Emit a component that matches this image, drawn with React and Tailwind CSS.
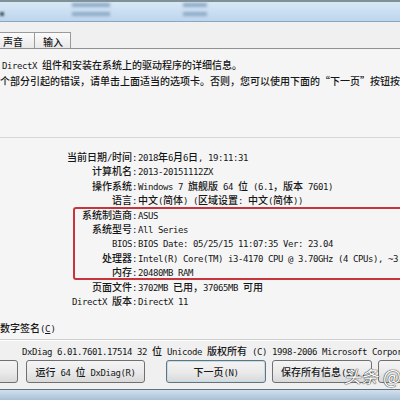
import React from "react";

// SimSun-style mix: CJK runs at full width, Latin runs as half-width mono
const CJK = /([\u2e80-\u9fff\u3000-\u303f\uff00-\uffef\u201c\u201d]+)/;

function T({ s }) {
  return s.split(CJK).map((part, i) =>
    part === "" ? null : CJK.test(part) ? (
      <span key={i} className="font-['Noto_Sans_CJK_SC',sans-serif] text-[10px] font-medium">{part}</span>
    ) : (
      <span key={i} className="font-['DejaVu_Sans_Mono',monospace] text-[9px] tracking-[-0.42px]">{part}</span>
    )
  );
}

const rows = [
  ["当前日期/时间", "2018年6月6日, 19:11:31"],
  ["计算机名", "2013-20151112ZX"],
  ["操作系统", "Windows 7 旗舰版 64 位 (6.1，版本 7601)"],
  ["语言", "中文(简体) (区域设置: 中文(简体))"],
  ["系统制造商", "ASUS"],
  ["系统型号", "All Series"],
  ["BIOS", "BIOS Date: 05/25/15 11:07:35 Ver: 23.04"],
  ["处理器", "Intel(R) Core(TM) i3-4170 CPU @ 3.70GHz (4 CPUs), ~3.7GHz"],
  ["内存", "20480MB RAM"],
  ["页面文件", "3702MB 已用，37065MB 可用"],
  ["DirectX 版本", "DirectX 11"],
];

function Btn({ className, children }) {
  return (
    <div
      className={
        "h-[23px] shrink-0 flex items-center justify-center rounded-[3px] border border-[#707070] bg-gradient-to-b from-[#f4f4f4] via-[#ebebeb] to-[#d9d9d9] text-[#1a1a1a] whitespace-nowrap leading-[14px] overflow-hidden " +
        className
      }
    >
      <span>{children}</span>
    </div>
  );
}

export default function App() {
  return (
    <div className="relative w-[400px] h-[400px] overflow-hidden bg-[#f0f0f0] text-[#161616] flex flex-col">
      {/* window title bar */}
      <div className="relative h-[22px] shrink-0 bg-gradient-to-b from-[#dbe9f6] to-[#bcd6ee] border-b border-[#8ea5bb]">
        <div className="h-[2px] bg-[#7f9096]" />
        <div className="absolute left-0 top-[12px] w-[4px] h-[4px] bg-[#4a5a68] blur-[1px]" />
        <div className="absolute left-[72px] top-[3px] w-[38px] h-[4px] bg-[#8eaac6] blur-[1.5px]" />
        <div className="absolute left-[72px] top-[12px] w-[38px] h-[4px] bg-[#8eaac6] blur-[1.5px]" />
        <div className="absolute left-[183px] top-[3px] w-[24px] h-[4px] bg-[#8eaac6] blur-[1.5px]" />
        <div className="absolute left-[183px] top-[12px] w-[24px] h-[4px] bg-[#8eaac6] blur-[1.5px]" />
      </div>

      {/* tabs */}
      <div className="h-[26px] shrink-0 flex items-end">
        <div className="ml-[-4px] w-[39px] h-[16px] border border-b-0 border-[#9a9a9a] bg-gradient-to-b from-[#fbfbfb] to-[#e9e9e9] pl-[6px] leading-[15px]">
          <T s="声音" />
        </div>
        <div className="w-[36px] h-[16px] border border-l-0 border-b-0 border-[#9a9a9a] bg-gradient-to-b from-[#fbfbfb] to-[#e9e9e9] pl-[8px] leading-[15px]">
          <T s="输入" />
        </div>
      </div>

      {/* tab page */}
      <div className="shrink-0 border-t border-[#8e8f8f] bg-[#f5f5f5] pt-[6px] whitespace-nowrap">
        <div className="h-[16px] leading-[16px] pl-[2px]">
          <T s="DirectX 组件和安装在系统上的驱动程序的详细信息。" />
        </div>
        <div className="h-[16px] leading-[16px]">
          <T s="个部分引起的错误，请单击上面适当的选项卡。否则，您可以使用下面的“下一页”按钮按顺序查看每页。" />
        </div>

        <div className="mt-[50px] h-[1px] bg-[#d6d6d6]" />

        <div className="mt-[10px]">
          {rows.map(([k, v]) => (
            <div key={k} className="flex leading-[14.4px] h-[14.4px]">
              <div className="w-[137px] shrink-0 text-right">
                <T s={k + ":"} />
              </div>
              <div className="pl-[1px]">
                <T s={v} />
              </div>
            </div>
          ))}
        </div>

        <div className="mt-[12px] h-[16px] leading-[16px]">
          <T s="数字签名(" />
          <span className="font-['DejaVu_Sans_Mono',monospace] text-[9px] underline">C</span>
          <T s=")" />
        </div>
        <div className="mt-[5px] h-[1px] bg-[#cfcfcf]" />
        <div className="h-[1px] bg-white" />
      </div>

      {/* version line and buttons */}
      <div className="flex-1 bg-[#f0f0f0] flex flex-col whitespace-nowrap">
        <div className="h-[16px] leading-[16px] pl-[22px]">
          <T s="DxDiag 6.01.7601.17514 32 位 Unicode 版权所有 (C) 1998-2006 Microsoft Corporation。保留所有权利。" />
        </div>
        <div className="mt-[3px] flex">
          <Btn className="ml-[-20px] w-[38px]" />
          <Btn className="ml-[8px] w-[119px]">
            <T s="运行 64 位 DxDiag(R)" />
          </Btn>
          <Btn className="ml-[21px] w-[100px] border-[#3c7fb1] from-[#eaf6fd] via-[#d9f0fc] to-[#bee6fd] shadow-[inset_0_0_0_1px_#b4e1f8]">
            <T s="下一页(N)" />
          </Btn>
          <Btn className="ml-[6px] w-[100px] justify-start pl-[8px]">
            <T s="保存所有信息(S)..." />
          </Btn>
          <Btn className="ml-[6px] w-[60px]" />
        </div>
        <div className="mt-auto h-[11px] border-t border-[#5d6f80] bg-gradient-to-b from-[#d2e0ec] to-[#a9c0d6]" />
      </div>

      {/* highlight frame around hardware rows */}
      <div className="absolute left-[73px] top-[207px] w-[340px] h-[73px] border-2 border-[#c8343c] rounded-[3px]" />

      {/* corner watermark */}
      <div className="absolute left-[344px] top-[366px] flex items-center gap-[5px] whitespace-nowrap font-['Noto_Sans_CJK_SC',sans-serif] text-[17px] leading-none italic text-white [text-shadow:0_0_1px_#444,0_0_1px_#444,0_0_1px_#444]">
        <span>头条</span>
        <span className="not-italic text-[19px]">@彩</span>
      </div>
    </div>
  );
}
